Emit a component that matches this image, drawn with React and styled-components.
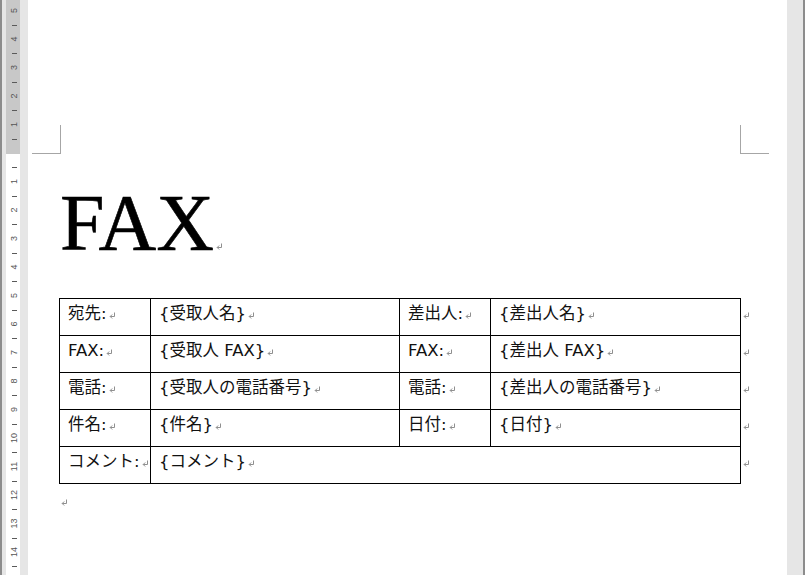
import React from 'react';
import styled, { createGlobalStyle } from 'styled-components';

const Global = createGlobalStyle`
  html, body { margin: 0; padding: 0; background: #e6e6e6; }
  body { font-family: "DejaVu Sans", "Noto Sans CJK JP", sans-serif; }
`;

const Window = styled.div`
  display: flex;
  width: 805px;
  height: 575px;
  box-sizing: border-box;
  overflow: hidden;
  background: #e6e6e6;
  border-left: 2px solid #8c8c8c;
  border-right: 2px solid #8c8c8c;
  padding-left: 4px;
`;

const RulerBox = styled.div`
  flex: 0 0 14px;
  margin-right: 8px;
  svg { display: block; }
`;

const Page = styled.div`
  flex: 0 0 759px;
  margin-right: 16px;
  background: #fff;
  display: flex;
  flex-direction: column;
`;

const Header = styled.div`
  display: flex;
  justify-content: space-between;
  padding: 125px 18px 0 4px;
`;

const CornerMark = styled.div`
  width: 29px;
  height: 29px;
  box-sizing: border-box;
  border-bottom: 1px solid #a6a6a6;
  ${(p) => (p.$side === 'left' ? 'border-right: 1px solid #a6a6a6;' : 'border-left: 1px solid #a6a6a6;')}
`;

const Body = styled.div`
  padding-left: 31px;
  display: flex;
  flex-direction: column;
`;

const Title = styled.h1`
  margin: 29px 0 0 1px;
  font-family: "Liberation Serif", "Times New Roman", serif;
  font-weight: normal;
  font-size: 80px;
  line-height: 80px;
  letter-spacing: 0;
  color: #000;
  white-space: nowrap;
  -webkit-text-stroke: 0.6px #000;
`;

const TableWrap = styled.div`
  display: flex;
  margin-top: 35px;
`;

const Grid = styled.div`
  display: grid;
  grid-template-columns: 91px 249px 91px 250px;
  grid-auto-rows: 37px;
  border-top: 1px solid #000;
  border-left: 1px solid #000;
`;

const Cell = styled.div`
  box-sizing: border-box;
  border-right: 1px solid #000;
  border-bottom: 1px solid #000;
  padding: 5px 4px 0 8px;
  font-size: 16.5px;
  line-height: 20px;
  color: #111;
  white-space: nowrap;
  overflow: hidden;
  ${(p) => (p.$span ? `grid-column: span ${p.$span};` : '')}
`;

const EndMarks = styled.div`
  display: flex;
  flex-direction: column;
  padding-top: 1px;
  margin-left: 2px;
`;

const EndMark = styled.div`
  height: 37px;
  box-sizing: border-box;
  padding-top: 5px;
  font-size: 16.5px;
  line-height: 20px;
`;

const MarkSvg = styled.svg`
  display: inline-block;
  width: ${(p) => p.$size || 7}px;
  height: ${(p) => p.$size || 7}px;
  margin-left: ${(p) => (p.$gap != null ? p.$gap : 2)}px;
  vertical-align: ${(p) => p.$valign || '0px'};
`;

const AfterPara = styled.p`
  margin: 7px 0 0 2px;
  font-size: 15.5px;
  line-height: 20px;
`;

function Mark({ size, gap, valign }) {
  return (
    <MarkSvg $size={size} $gap={gap} $valign={valign} viewBox="0 0 7 7" aria-hidden="true">
      <path d="M5.5 0.5 V4.5 H1.2" fill="none" stroke="#8f8f8f" strokeWidth="1" />
      <path d="M3.2 2.5 L1.2 4.5 L3.2 6.5" fill="none" stroke="#8f8f8f" strokeWidth="1" />
    </MarkSvg>
  );
}

function Ruler() {
  const U = 28.5;
  const Y0 = 153;
  const items = [];
  for (let n = 1; n <= 5; n++) {
    items.push({ y: Y0 - n * U, label: String(n) });
  }
  for (let n = 1; n <= 14; n++) {
    items.push({ y: Y0 + n * U, label: String(n) });
  }
  const ticks = [];
  for (let n = 1; n <= 6; n++) ticks.push(Y0 - (n - 0.5) * U);
  for (let n = 1; n <= 15; n++) ticks.push(Y0 + (n - 0.5) * U);
  return (
    <svg width="14" height="575" viewBox="0 0 14 575">
      <rect x="0" y="0" width="14" height={Y0 + 1} fill="#c8c8c8" />
      <rect x="0" y={Y0 + 1} width="14" height={575 - Y0} fill="#ffffff" />
      {ticks.map((y, i) => (
        <rect key={'t' + i} x="6" y={Math.round(y)} width="5" height="1" fill="#5a5a5a" />
      ))}
      {items.map((it, i) => (
        <text
          key={'n' + i}
          transform={`translate(8 ${it.y.toFixed(1)}) rotate(-90)`}
          textAnchor="middle"
          dominantBaseline="central"
          fontFamily="Liberation Sans, Arial, sans-serif"
          fontSize="9"
          fill="#555"
        >
          {it.label}
        </text>
      ))}
    </svg>
  );
}

const rows = [
  ['宛先:', '{受取人名}', '差出人:', '{差出人名}'],
  ['FAX:', '{受取人 FAX}', 'FAX:', '{差出人 FAX}'],
  ['電話:', '{受取人の電話番号}', '電話:', '{差出人の電話番号}'],
  ['件名:', '{件名}', '日付:', '{日付}'],
];

export default function App() {
  return (
    <>
      <Global />
      <Window>
        <RulerBox>
          <Ruler />
        </RulerBox>
        <Page>
          <Header>
            <CornerMark $side="left" />
            <CornerMark $side="right" />
          </Header>
          <Body>
            <Title>
              FAX
              <Mark size={7} gap={2} valign="0px" />
            </Title>
            <TableWrap>
              <Grid>
                {rows.map((r, i) =>
                  r.map((t, j) => (
                    <Cell key={`${i}-${j}`}>
                      {t}
                      <Mark />
                    </Cell>
                  ))
                )}
                <Cell>
                  コメント:
                  <Mark />
                </Cell>
                <Cell $span={3}>
                  {'{コメント}'}
                  <Mark />
                </Cell>
              </Grid>
              <EndMarks>
                {[0, 1, 2, 3, 4].map((i) => (
                  <EndMark key={i}>
                    <Mark gap={0} />
                  </EndMark>
                ))}
              </EndMarks>
            </TableWrap>
            <AfterPara>
              <Mark gap={0} />
            </AfterPara>
          </Body>
        </Page>
      </Window>
    </>
  );
}
